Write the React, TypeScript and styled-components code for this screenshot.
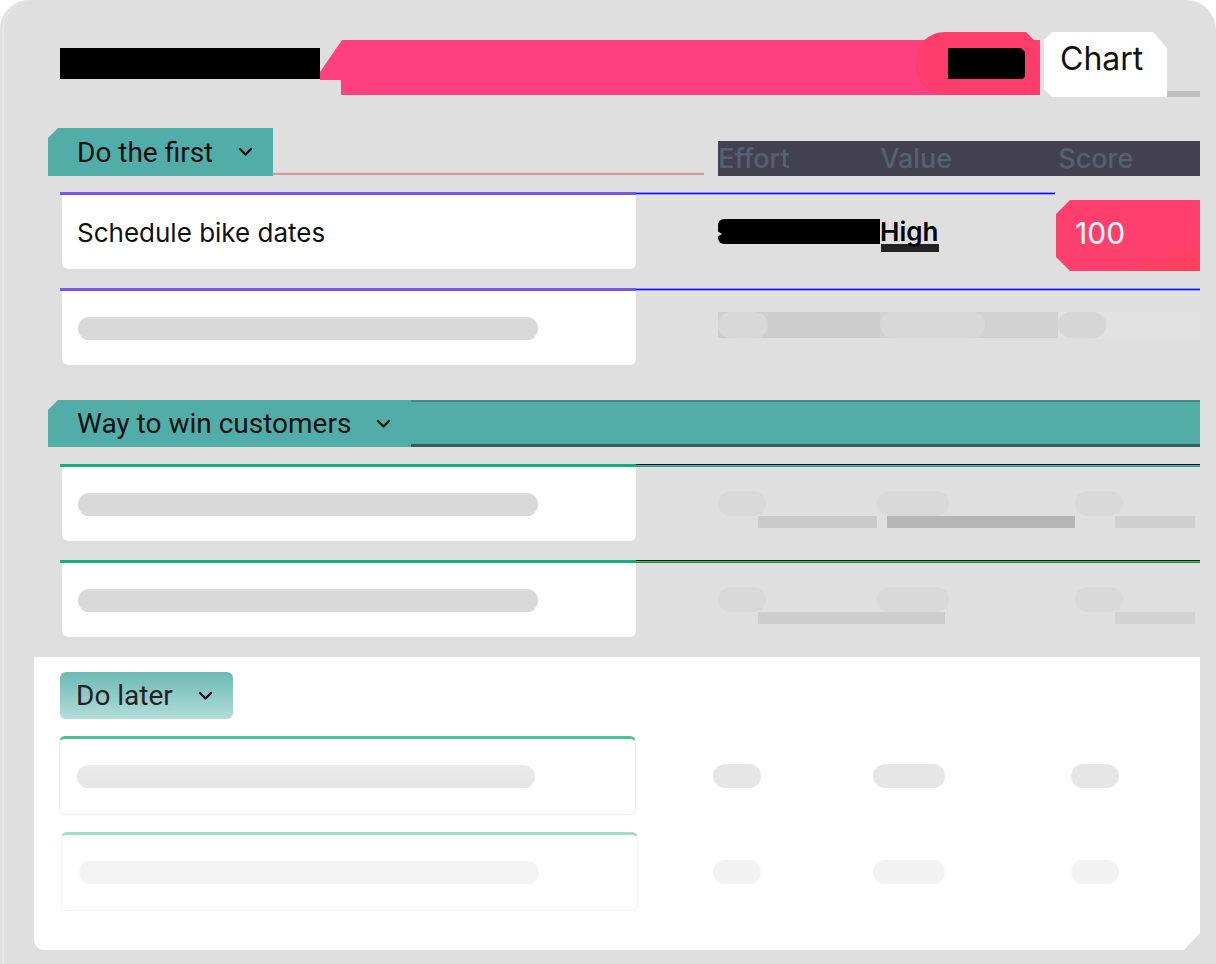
import React from 'react'
import styled, { createGlobalStyle, css } from 'styled-components'

const GlobalStyle = createGlobalStyle`
  html, body {
    margin: 0;
    padding: 0;
    background: #ffffff;
  }
  body {
    font-family: Inter, 'Noto Sans', sans-serif;
  }
  * {
    box-sizing: border-box;
  }
`

const Frame = styled.div`
  width: 1216px;
  height: 964px;
  background: #dfdfdf;
  border-radius: 30px 30px 0 0;
  box-shadow: inset 2px 0 0 #dfdfdf, inset 4px 0 0 #e7e7e7;
  padding-top: 32px;
  overflow: hidden;
  display: flex;
  flex-direction: column;
`

/* ---------- top bar ---------- */

const TopBar = styled.div`
  display: flex;
  align-items: flex-start;
  height: 65px;
  padding-left: 60px;
`

const TitleBlock = styled.div`
  width: 260px;
  height: 31px;
  margin-top: 16px;
  background: #000;
`

const Banner = styled.div`
  width: 720px;
  height: 55px;
  margin-top: 8px;
  background: #ff4080;
  clip-path: polygon(0 32px, 22px 0, 100% 0, 100% 100%, 21px 100%, 21px 40px, 0 40px);
`

const Pill = styled.div`
  width: 125px;
  height: 63px;
  margin-left: -125px;
  padding: 16px 0 0 33px;
  background: #ff3d6c;
  border-radius: 30px 0 0 30px;
  clip-path: polygon(0 0, calc(100% - 14px) 0, 100% 14px, 100% 100%, 0 100%);
`

const PillBlock = styled.div`
  width: 77px;
  height: 31px;
  background: #000;
  border-radius: 0 4px 4px 0;
  clip-path: polygon(0 0, calc(100% - 4px) 0, 100% 4px, 100% 100%, 0 100%);
`

const ChartButton = styled.div`
  width: 123px;
  height: 65px;
  margin-left: 4px;
  padding: 0 0 12px 16px;
  display: flex;
  align-items: center;
  background: #fff;
  color: #111;
  font-size: 32px;
  clip-path: polygon(8px 0, calc(100% - 14px) 0, 100% 16px, 100% 100%, 8px 100%, 0 calc(100% - 8px), 0 8px);
`

const Sliver = styled.div`
  width: 33px;
  height: 6px;
  margin-top: 59px;
  background: #c0c0c0;
`

/* ---------- board ---------- */

const Board = styled.div`
  width: 1200px;
  padding-left: 48px;
  display: flex;
  flex-direction: column;
`

const GroupHeader = styled.div<{ $mt: number; $h: number }>`
  display: flex;
  align-items: flex-end;
  height: ${({ $h }) => $h}px;
  margin-top: ${({ $mt }) => $mt}px;
`

const Tab = styled.div`
  height: 100%;
  padding: 0 20px 0 29px;
  display: flex;
  align-items: center;
  gap: 25px;
  background: #52ada9;
  color: #111;
  font-family: Roboto, 'Liberation Sans', sans-serif;
  font-size: 28px;
  flex: none;
  clip-path: polygon(10px 0, 100% 0, 100% 100%, 0 100%, 0 10px);
`

const TabLine = styled.div`
  width: 431px;
  height: 2px;
  margin-bottom: 1px;
  background: #d29b9b;
  box-shadow: 0 -1px 0 #e6c9c9;
`

const ColumnHeads = styled.div`
  flex: 1;
  height: 35px;
  margin-left: 14px;
  display: flex;
  align-items: center;
  background: #434150;
  color: #556070;
  font-size: 27px;
  line-height: 35px;
  font-weight: 500;
`

const HeadCell = styled.div<{ $w?: number }>`
  ${({ $w }) => ($w ? `width: ${$w}px;` : 'flex: 1;')}
  white-space: nowrap;
`

const TealBar = styled.div`
  flex: 1;
  height: 100%;
  background: #52ada9;
  border-top: 2px solid #3f8d89;
  border-bottom: 3px solid #2f5f5c;
`

const Rows = styled.div<{ $mt: number; $gap: number }>`
  display: flex;
  flex-direction: column;
  gap: ${({ $gap }) => $gap}px;
  margin: ${({ $mt }) => $mt}px 0 0 12px;
`

const Row = styled.div`
  display: flex;
  flex-direction: column;
`

const LineRow = styled.div`
  display: flex;
  height: 3px;
`

const LeftLine = styled.div<{ $color: string }>`
  width: 576px;
  background: ${({ $color }) => $color};
`

const RightLine = styled.div<{ $kind: 'blue' | 'teal' | 'green'; $w?: number }>`
  ${({ $w }) => ($w ? `width: ${$w}px;` : 'flex: 1;')}
  ${({ $kind }) =>
    $kind === 'blue'
      ? css`
          background: linear-gradient(#8c8cff 0 1px, #1010ff 1px 2px, #9c9cff 2px 3px);
        `
      : $kind === 'teal'
        ? css`
            background: linear-gradient(#000 0 1px, #2fc4b8 1px 2px, #16a092 2px 3px);
          `
        : css`
            background: linear-gradient(#0a0a0a 0 1px, #22e030 1px 2px, #0f8c64 2px 3px);
          `}
`

const RowBody = styled.div`
  display: flex;
  height: 74px;
`

const Card = styled.div`
  width: 574px;
  margin-left: 2px;
  padding-left: 15px;
  display: flex;
  align-items: center;
  background: #fff;
  border-radius: 0 0 6px 6px;
  color: #111;
  font-size: 26px;
`

const Skeleton = styled.div<{ $tone?: string }>`
  width: 460px;
  height: 23px;
  margin-left: 1px;
  border-radius: 12px;
  background: ${({ $tone }) => $tone ?? '#d9d9d9'};
`

const Cells = styled.div`
  flex: 1;
  display: flex;
  padding-left: 82px;
`

const Cell = styled.div<{ $w?: number }>`
  ${({ $w }) => ($w ? `width: ${$w}px;` : 'flex: 1;')}
  display: flex;
  align-items: center;
`

const EffortBar = styled.div`
  width: 162px;
  height: 25px;
  margin-top: -1px;
  background: #000;
  border-radius: 6px 0 0 6px;
  clip-path: polygon(0 0, 100% 0, 100% 100%, 0 100%, 0 70%, 4px 60%, 0 50%);
`

const HighText = styled.div`
  font-size: 26px;
  font-weight: 600;
  color: #000;
  line-height: 25px;
  margin-top: -1px;
  box-shadow: 0 9px 0 -1px #222;
  padding-right: 2px;
`

const ScoreBadge = styled.div`
  align-self: flex-start;
  width: 144px;
  height: 71px;
  margin: 5px 0 0 -2px;
  padding: 0 0 5px 19px;
  display: flex;
  align-items: center;
  background: linear-gradient(160deg, #ff406e 70%, #ff4058 100%);
  color: #fff;
  font-size: 30px;
  clip-path: polygon(14px 0, 100% 0, 100% 100%, 14px 100%, 0 calc(100% - 14px), 0 14px);
`

const Strip = styled.div<{ $dark: string; $light: string }>`
  display: flex;
  align-items: center;
  width: 100%;
  height: 26px;
  margin-top: -6px;
  background: ${({ $dark }) => $dark};
  & > span {
    display: block;
    height: 100%;
    border-radius: 13px;
    background: ${({ $light }) => $light};
  }
`

const GhostCell = styled.div`
  display: flex;
  flex-direction: column;
  width: 100%;
  margin-top: 10px;
`

const GhostPill = styled.span<{ $w: number }>`
  display: block;
  width: ${({ $w }) => $w}px;
  height: 25px;
  border-radius: 13px;
  background: #d9d9d9;
`

const GhostShade = styled.span<{ $ml: number; $w: number; $tone: string }>`
  display: block;
  width: ${({ $w }) => $w}px;
  height: 12px;
  margin-left: ${({ $ml }) => $ml}px;
  background: ${({ $tone }) => $tone};
`

/* ---------- bottom panel ---------- */

const Panel = styled.div`
  width: 1166px;
  height: 293px;
  margin: 20px 0 0 34px;
  padding: 15px 0 0 25px;
  background: #fff;
  border-radius: 0 0 0 10px;
  clip-path: polygon(0 0, 100% 0, 100% calc(100% - 17px), calc(100% - 16px) 100%, 0 100%);
`

const LaterTab = styled.div`
  width: 173px;
  height: 47px;
  margin-left: 1px;
  padding-left: 16px;
  display: flex;
  align-items: center;
  gap: 25px;
  border-radius: 6px;
  background: linear-gradient(#6db9b4, #b3ddda);
  color: #222;
  font-family: Roboto, 'Liberation Sans', sans-serif;
  font-size: 28px;
`

const PanelRows = styled.div`
  display: flex;
  flex-direction: column;
  gap: 17px;
  margin-top: 17px;
`

const PanelRow = styled.div<{ $offset: number }>`
  display: flex;
  padding-left: ${({ $offset }) => $offset}px;
`

const PanelCard = styled.div<{ $line: string; $border: string }>`
  width: 577px;
  height: 79px;
  padding-left: 16px;
  display: flex;
  align-items: center;
  border: 1px solid ${({ $border }) => $border};
  border-top: 3px solid ${({ $line }) => $line};
  border-radius: 6px;
  background: #fff;
`

const SoftPill = styled.span<{ $w: number; $tone: string; $ml?: number }>`
  display: block;
  width: ${({ $w }) => $w}px;
  height: 24px;
  margin-left: ${({ $ml }) => $ml ?? 0}px;
  border-radius: 12px;
  background: ${({ $tone }) => $tone};
`

const PanelCells = styled.div<{ $pl: number }>`
  display: flex;
  align-items: center;
  padding-left: ${({ $pl }) => $pl}px;
`

const Chevron = () => (
  <svg width="15" height="10" viewBox="0 0 15 10" fill="none">
    <polyline points="2,2 7.5,7.5 13,2" stroke="#111" strokeWidth="2.4" strokeLinecap="round" strokeLinejoin="round" />
  </svg>
)

type Shade = [number, number, string]

const GhostRow = ({ shades }: { shades: Shade[] }) => (
  <Cells>
    <Cell $w={159}>
      <GhostCell>
        <GhostPill $w={48} />
        <GhostShade $ml={shades[0][0]} $w={shades[0][1]} $tone={shades[0][2]} />
      </GhostCell>
    </Cell>
    <Cell $w={198}>
      <GhostCell>
        <GhostPill $w={72} />
        <GhostShade $ml={shades[1][0]} $w={shades[1][1]} $tone={shades[1][2]} />
      </GhostCell>
    </Cell>
    <Cell>
      <GhostCell>
        <GhostPill $w={48} />
        <GhostShade $ml={shades[2][0]} $w={shades[2][1]} $tone={shades[2][2]} />
      </GhostCell>
    </Cell>
  </Cells>
)

const PanelPills = ({ tone, pl }: { tone: string; pl: number }) => (
  <PanelCells $pl={pl}>
    <SoftPill $w={48} $tone={tone} />
    <SoftPill $w={72} $tone={tone} $ml={112} />
    <SoftPill $w={48} $tone={tone} $ml={126} />
  </PanelCells>
)

export default function App() {
  return (
    <>
      <GlobalStyle />
      <Frame>
        <TopBar>
          <TitleBlock />
          <Banner />
          <Pill>
            <PillBlock />
          </Pill>
          <ChartButton>Chart</ChartButton>
          <Sliver />
        </TopBar>

        <Board>
          <GroupHeader $mt={31} $h={48}>
            <Tab>
              Do the first
              <Chevron />
            </Tab>
            <TabLine />
            <ColumnHeads>
              <HeadCell $w={162}>Effort</HeadCell>
              <HeadCell $w={178}>Value</HeadCell>
              <HeadCell>Score</HeadCell>
            </ColumnHeads>
          </GroupHeader>

          <Rows $mt={16} $gap={19}>
            <Row>
              <LineRow>
                <LeftLine $color="#7b55e8" />
                <RightLine $kind="blue" $w={419} />
              </LineRow>
              <RowBody>
                <Card>Schedule bike dates</Card>
                <Cells>
                  <Cell $w={162}>
                    <EffortBar />
                  </Cell>
                  <Cell $w={178}>
                    <HighText>High</HighText>
                  </Cell>
                  <Cell>
                    <ScoreBadge>100</ScoreBadge>
                  </Cell>
                </Cells>
              </RowBody>
            </Row>
            <Row>
              <LineRow>
                <LeftLine $color="#7b55e8" />
                <RightLine $kind="blue" />
              </LineRow>
              <RowBody>
                <Card>
                  <Skeleton />
                </Card>
                <Cells>
                  <Cell $w={162}>
                    <Strip $dark="#cdcdcd" $light="#d8d8d8">
                      <span style={{ width: 50 }} />
                    </Strip>
                  </Cell>
                  <Cell $w={178}>
                    <Strip $dark="#d2d2d2" $light="#d8d8d8">
                      <span style={{ width: 105 }} />
                    </Strip>
                  </Cell>
                  <Cell>
                    <Strip $dark="#e2e2e2" $light="#d6d6d6">
                      <span style={{ width: 48 }} />
                    </Strip>
                  </Cell>
                </Cells>
              </RowBody>
            </Row>
          </Rows>

          <GroupHeader $mt={35} $h={47}>
            <Tab>
              Way to win customers
              <Chevron />
            </Tab>
            <TealBar />
          </GroupHeader>

          <Rows $mt={17} $gap={19}>
            <Row>
              <LineRow>
                <LeftLine $color="#0fb07a" />
                <RightLine $kind="teal" />
              </LineRow>
              <RowBody>
                <Card>
                  <Skeleton />
                </Card>
                <GhostRow
                  shades={[
                    [40, 119, '#cacaca'],
                    [10, 188, '#b6b6b6'],
                    [40, 80, '#cfcfcf'],
                  ]}
                />
              </RowBody>
            </Row>
            <Row>
              <LineRow>
                <LeftLine $color="#0fb07a" />
                <RightLine $kind="green" />
              </LineRow>
              <RowBody>
                <Card>
                  <Skeleton />
                </Card>
                <GhostRow
                  shades={[
                    [40, 119, '#cdcdcd'],
                    [0, 68, '#cdcdcd'],
                    [40, 80, '#d2d2d2'],
                  ]}
                />
              </RowBody>
            </Row>
          </Rows>
        </Board>

        <Panel>
          <LaterTab>
            Do later
            <Chevron />
          </LaterTab>
          <PanelRows>
            <PanelRow $offset={0}>
              <PanelCard $line="#46c39a" $border="#ececec">
                <Skeleton $tone="linear-gradient(#eaeaea, #e5e5e5)" style={{ width: 458 }} />
              </PanelCard>
              <PanelPills tone="#e6e6e6" pl={77} />
            </PanelRow>
            <PanelRow $offset={2}>
              <PanelCard $line="#9ddfc8" $border="#f3f3f3">
                <Skeleton $tone="#f3f3f3" />
              </PanelCard>
              <PanelPills tone="#f2f2f2" pl={75} />
            </PanelRow>
          </PanelRows>
        </Panel>
      </Frame>
    </>
  )
}
